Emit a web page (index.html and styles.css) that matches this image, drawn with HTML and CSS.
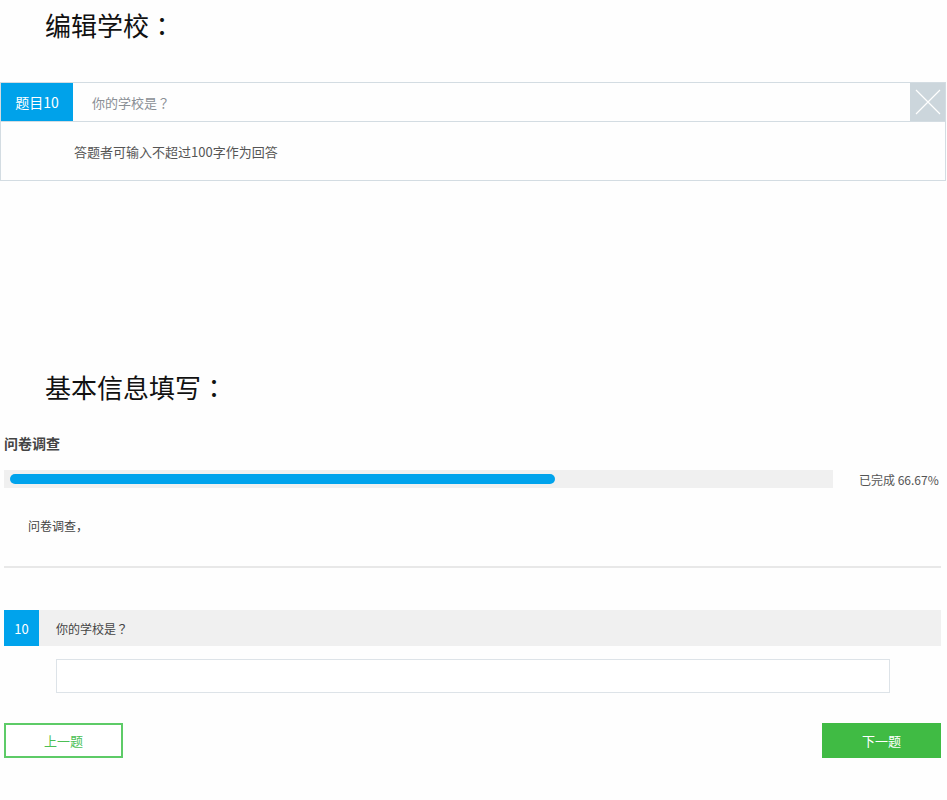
FILE: index.html
```html
<!DOCTYPE html>
<html lang="zh-CN">
<head>
<meta charset="utf-8">
<title>问卷</title>
<link rel="stylesheet" href="styles.css">
</head>
<body>
<h2 class="section-title">编辑学校<span class="punct" lang="zh-TW">：</span></h2>

<div class="edit-card">
  <div class="edit-head">
    <div class="edit-label">题目10</div>
    <div class="edit-question">你的学校是<span class="punct" lang="zh-TW">？</span></div>
    <div class="edit-close">
      <svg width="26" height="26" viewBox="0 0 26 26"><path d="M1 1 L25 25 M25 1 L1 25" stroke="#ffffff" stroke-width="1.2" fill="none"/></svg>
    </div>
  </div>
  <div class="edit-body">答题者可输入不超过100字作为回答</div>
</div>

<h2 class="section-title second">基本信息填写<span class="punct" lang="zh-TW">：</span></h2>

<div class="survey">
  <div class="survey-name">问卷调查</div>
  <div class="progress-row">
    <div class="progress-track"><div class="progress-fill" style="width:66.67%"></div></div>
    <div class="progress-text">已完成 66.67%</div>
  </div>
  <div class="survey-desc">问卷调查<span class="punct">，</span></div>
  <div class="divider"></div>
  <div class="q-row">
    <div class="q-num">10</div>
    <div class="q-text">你的学校是<span class="punct" lang="zh-TW">？</span></div>
  </div>
  <div class="q-answer"><input class="q-input" type="text"></div>
  <div class="nav">
    <button class="btn btn-prev">上一题</button>
    <button class="btn btn-next">下一题</button>
  </div>
</div>
</body>
</html>
```

FILE: styles.css
```css
* { box-sizing: border-box; }
body {
  margin: 0;
  background: #fefefe;
  font-family: "Noto Sans CJK SC", "Noto Sans", sans-serif;
  color: #333;
  text-spacing-trim: space-all;
}
.punct {
  font-family: "Noto Sans CJK TC", "Noto Sans CJK SC", sans-serif;
  text-spacing-trim: space-all;
}
.section-title {
  margin: 0;
  padding-left: 45px;
  font-size: 26px;
  font-weight: normal;
  line-height: 50px;
  color: #111;
}
.section-title.second {
  margin-top: 181px;
}
.edit-card {
  margin-top: 32px;
  width: 946px;
  border: 1px solid #d3dce2;
}
.edit-head {
  display: flex;
  height: 39px;
  border-bottom: 1px solid #d3dce2;
}
.edit-label {
  width: 72px;
  background: #00a2ea;
  color: #fff;
  font-size: 14px;
  display: flex;
  align-items: center;
  justify-content: center;
}
.edit-question {
  flex: 1;
  padding-left: 19px;
  font-size: 13px;
  color: #8a8f95;
  display: flex;
  align-items: center;
}
.edit-close {
  width: 35px;
  background: #ccd6dc;
  display: flex;
  align-items: center;
  justify-content: center;
}
.edit-body {
  height: 58px;
  padding-left: 73px;
  display: flex;
  align-items: center;
  font-size: 13px;
  color: #555;
}
.survey {
  padding: 0 6px 0 4px;
}
.survey-name {
  margin-top: 21px;
  font-size: 14px;
  font-weight: bold;
  line-height: 20px;
  color: #444;
}
.progress-row {
  margin-top: 17px;
  display: flex;
  align-items: center;
}
.progress-track {
  width: 829px;
  height: 18px;
  background: #f0f0f0;
  padding: 4px 6px;
}
.progress-fill {
  height: 10px;
  border-radius: 5px;
  background: #00a3ec;
}
.progress-text {
  margin-left: 26px;
  font-size: 12px;
  color: #555;
  white-space: nowrap;
}
.survey-desc {
  margin-top: 28px;
  padding-left: 24px;
  font-size: 12px;
  line-height: 20px;
  color: #444;
}
.divider {
  margin-top: 30px;
  height: 2px;
  background: #e8e8e8;
}
.q-row {
  margin-top: 42px;
  display: flex;
  height: 36px;
  background: #f0f0f0;
}
.q-num {
  width: 35px;
  background: #00a3ec;
  color: #fff;
  font-size: 13px;
  display: flex;
  align-items: center;
  justify-content: center;
}
.q-text {
  padding-left: 17px;
  font-size: 12px;
  color: #444;
  display: flex;
  align-items: center;
}
.q-answer {
  margin-top: 13px;
  padding-left: 52px;
}
.q-input {
  display: block;
  width: 834px;
  height: 34px;
  border: 1px solid #dde3e8;
  background: #fff;
  outline: none;
}
.nav {
  margin-top: 30px;
  display: flex;
  justify-content: space-between;
}
.btn {
  width: 119px;
  height: 35px;
  font-family: inherit;
  font-size: 13px;
  cursor: pointer;
}
.btn-prev {
  background: #fff;
  border: 2px solid #5dcb67;
  color: #4cbf55;
}
.btn-next {
  background: #40bb44;
  border: 1px solid #40bb44;
  color: #fff;
}
```
